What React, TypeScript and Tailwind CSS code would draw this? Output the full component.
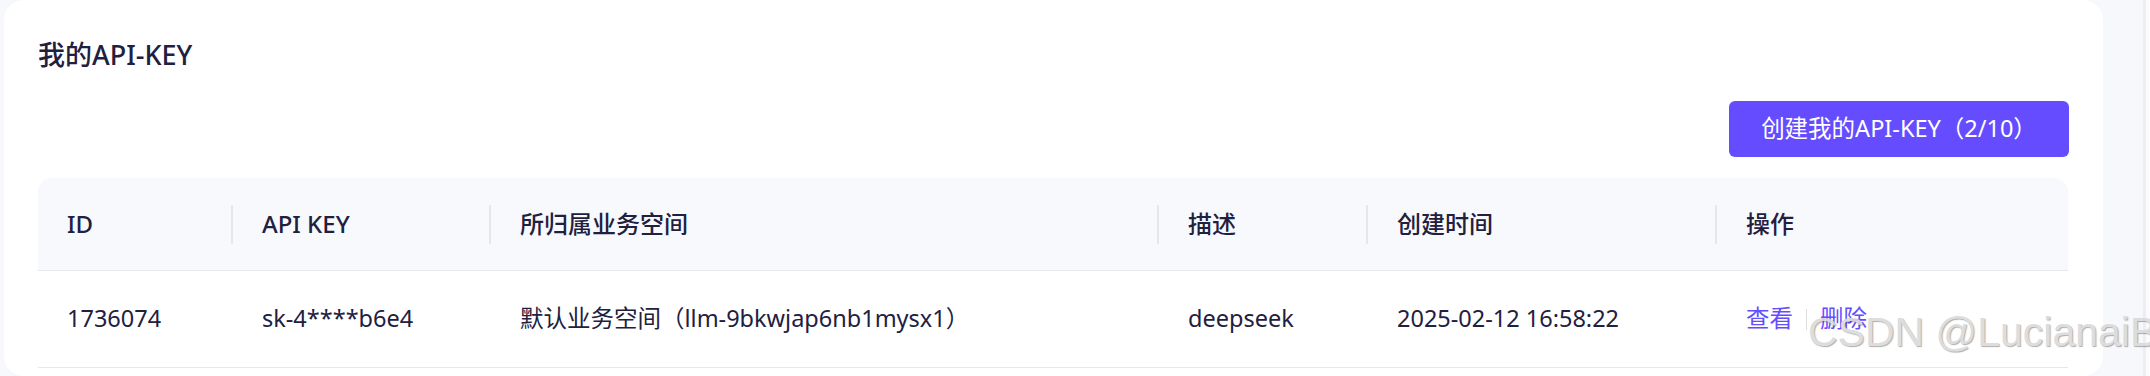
import React from 'react';

const columns = [
	{ key: 'id', title: 'ID', width: 'w-[195px]' },
	{ key: 'apiKey', title: 'API KEY', width: 'w-[258px]' },
	{ key: 'space', title: '所归属业务空间', width: 'w-[668px]' },
	{ key: 'desc', title: '描述', width: 'w-[209px]' },
	{ key: 'createdAt', title: '创建时间', width: 'w-[349px]' },
	{ key: 'actions', title: '操作', width: 'w-[351px]' },
];

const rows = [
	{
		id: '1736074',
		apiKey: 'sk-4****b6e4',
		space: '默认业务空间（llm-9bkwjap6nb1mysx1）',
		desc: 'deepseek',
		createdAt: '2025-02-12 16:58:22',
	},
];

const font = "font-['Noto_Sans','Noto_Sans_CJK_SC',sans-serif]";

export default function App() {
	return (
		<div
			className={`relative flex h-[376px] w-[2150px] overflow-hidden bg-[#f7f8fc] ${font}`}
		>
			<div className="ml-[4px] w-[2099px] shrink-0 rounded-[20px] bg-white px-[34px] pt-[38px]">
				<h2 className="text-[27px] leading-[34px] font-medium text-[#22203f]">
					我的API-KEY
				</h2>
				<div className="mt-[29px] flex justify-end">
					<button className="flex h-[56px] w-[340px] items-center justify-center rounded-[6px] bg-[#654dff] text-[23.5px] text-white">
						创建我的API-KEY（2/10）
					</button>
				</div>
				<div className="mt-[21px] w-[2030px]">
					<div className="flex h-[93px] rounded-t-[14px] border-b border-[#e7e8ee] bg-[#f8f9fd]">
						{columns.map((col, i) => (
							<div
								key={col.key}
								className={`flex items-center justify-between pl-[29px] ${col.width}`}
							>
								<span className="text-[24px] font-medium text-[#22203f]">
									{col.title}
								</span>
								{i < columns.length - 1 && (
									<span className="h-[39px] w-[2px] bg-[#e6e7ec]" />
								)}
							</div>
						))}
					</div>
					{rows.map((row) => (
						<div
							key={row.id}
							className="flex h-[97px] border-b border-[#e7e8ee] text-[23.5px] text-[#22203f]"
						>
							<div className="flex w-[195px] items-center pl-[29px]">{row.id}</div>
							<div className="flex w-[258px] items-center pl-[29px]">{row.apiKey}</div>
							<div className="flex w-[668px] items-center pl-[29px]">{row.space}</div>
							<div className="flex w-[209px] items-center pl-[29px]">{row.desc}</div>
							<div className="flex w-[349px] items-center pl-[29px]">{row.createdAt}</div>
							<div className="flex w-[351px] items-center gap-[13px] pl-[29px] text-[#654dff]">
								<span>查看</span>
								<span className="h-[21px] w-px bg-[#dcdde3]" />
								<span>删除</span>
							</div>
						</div>
					))}
				</div>
			</div>
			<div className="flex-1" />
			<div className="w-[3px] bg-[#eceef3]" />
			<div className="w-[4px] bg-[#fbfbfd]" />
			<div className="pointer-events-none absolute top-[312px] left-[1808px] font-['Liberation_Sans',sans-serif] text-[41px] leading-none whitespace-nowrap text-[#dadada] opacity-90 [text-shadow:1px_1px_1px_rgba(0,0,0,0.35)]">
				CSDN @LucianaiB
			</div>
		</div>
	);
}
